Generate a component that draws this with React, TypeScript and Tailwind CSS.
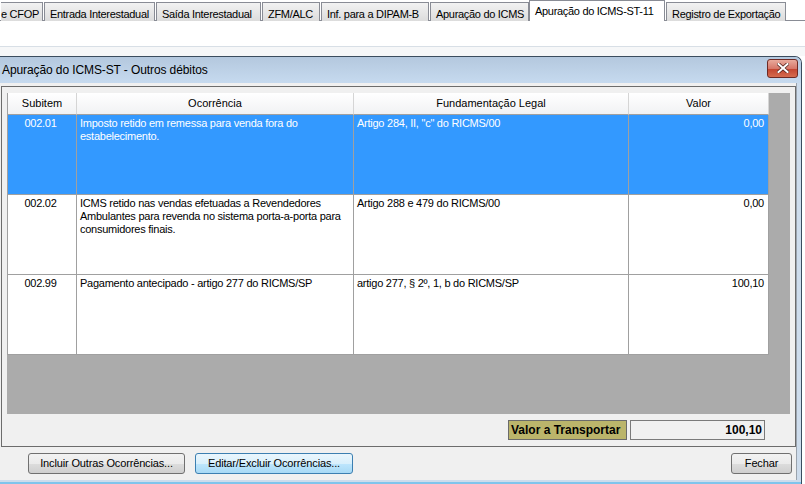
import React from "react";

const font = { fontFamily: '"Liberation Sans", Arial, sans-serif' };

const tabs = [
  { label: "e CFOP", w: "w-[42px]", active: false, first: true },
  { label: "Entrada Interestadual", w: "w-[111px]", active: false },
  { label: "Saída Interestadual", w: "w-[105px]", active: false },
  { label: "ZFM/ALC", w: "w-[58px]", active: false },
  { label: "Inf. para a DIPAM-B", w: "w-[108px]", active: false },
  { label: "Apuração do ICMS", w: "w-[99px]", active: false },
  { label: "Apuração do ICMS-ST-11", w: "w-[136px]", active: true },
  { label: "Registro de Exportação", w: "w-[120px]", active: false },
];

const rows = [
  {
    sub: "002.01",
    oc: "Imposto retido em remessa para venda fora do estabelecimento.",
    fund: 'Artigo 284, II, "c" do RICMS/00',
    val: "0,00",
    sel: true,
  },
  {
    sub: "002.02",
    oc: "ICMS retido nas vendas efetuadas a Revendedores Ambulantes para revenda no sistema porta-a-porta para consumidores finais.",
    fund: "Artigo 288 e 479 do RICMS/00",
    val: "0,00",
    sel: false,
  },
  {
    sub: "002.99",
    oc: "Pagamento antecipado - artigo 277 do RICMS/SP",
    fund: "artigo 277, § 2º, 1, b do RICMS/SP",
    val: "100,10",
    sel: false,
  },
];

function Btn({ children, w, focused }: { children: React.ReactNode; w: string; focused?: boolean }) {
  return (
    <div
      className={`${w} h-[21px] rounded-[3px] border ${
        focused ? "border-[#3c7fb1]" : "border-[#707070]"
      } flex items-center justify-center text-[11px] tracking-[-0.15px] text-black ${
        focused
          ? "bg-[linear-gradient(to_bottom,#eaf6fd_0%,#d9f0fc_50%,#bee6fd_51%,#a7d9f5_100%)]"
          : "bg-[linear-gradient(to_bottom,#f2f2f2_0%,#ebebeb_50%,#dddddd_51%,#cfcfcf_100%)]"
      }`}
    >
      {children}
    </div>
  );
}

export default function App() {
  return (
    <div className="w-[805px] h-[484px] overflow-hidden bg-white flex flex-col" style={font}>
      {/* Tab strip */}
      <div className="h-[21px] flex items-end shrink-0 relative">
        <div className="absolute left-0 right-0 bottom-0 h-[1px] bg-[#898c95]" />
        {tabs.map((t, i) => (
          <div
            key={i}
            className={`${t.w} ${
              t.active
                ? "h-[21px] bg-white border-l border-r border-t border-[#898c95] z-10 pt-[2px] pl-[5px]"
                : "h-[19px] border-l border-r border-t border-[#898c95] bg-[linear-gradient(to_bottom,#f2f2f2,#dcdcdc)] pt-[3px] ml-[1px]"
            } ${t.first ? "border-l-0 ml-0 pl-0" : "pl-[5px]"} shrink-0 text-[11px] tracking-[-0.3px] text-black whitespace-nowrap overflow-hidden relative`}
          >
            {t.label}
          </div>
        ))}
      </div>
      {/* white page area */}
      <div className="h-[26px] bg-white border-b border-[#d8dfe6] shrink-0" />
      <div className="h-[9px] bg-[#f6f7f8] shrink-0" />
      {/* Dialog window */}
      <div className="w-[802px] flex-1 border-t border-r border-[#3b4c5e] rounded-tr-[7px] bg-[#cddcec] flex flex-col overflow-hidden">
        {/* Title bar */}
        <div className="h-[26px] shrink-0 bg-[linear-gradient(to_bottom,#b4c8de,#c6daef)] flex items-center pl-[2px] pr-[3px] justify-between">
          <span className="text-[12px] tracking-[-0.1px] text-black">Apuração do ICMS-ST - Outros débitos</span>
          <div className="w-[31px] h-[19px] rounded-[3px] border border-[#6e2a24] bg-[linear-gradient(to_bottom,#e9aa9c_0%,#d7786a_50%,#c2432f_51%,#d56c4f_100%)] flex items-center justify-center mt-[-4px]">
            <svg width="12" height="10" viewBox="0 0 12 10">
              <path d="M1.5 1 L10.5 9 M10.5 1 L1.5 9" stroke="#5a2a24" strokeWidth="3.6" strokeLinecap="square" />
              <path d="M1.5 1 L10.5 9 M10.5 1 L1.5 9" stroke="#ffffff" strokeWidth="2" strokeLinecap="square" />
            </svg>
          </div>
        </div>
        {/* Client area */}
        <div className="flex-1 mr-[4px] mb-[2px] bg-[#f0f0f0] border-r border-[#9aa3ad] flex flex-col">
          {/* Panel */}
          <div className="ml-[1px] mt-[3px] w-[795px] h-[361px] border border-[#6c6c6c] flex flex-col">
            {/* Grid */}
            <div className="ml-[5px] mt-[6px] w-[783px] h-[321px] bg-[#ababab] flex flex-col">
              {/* Header */}
              <div className="flex h-[22px] text-[11px] text-black">
                <div className="w-[70px] border-l border-[#a0a0a0] border-r border-r-[#d5d5d5] border-b border-b-[#a0a0a0] bg-[linear-gradient(to_bottom,#ffffff,#f1f2f4)] flex items-center justify-center">
                  Subitem
                </div>
                <div className="w-[277px] border-r border-[#d5d5d5] border-b border-b-[#a0a0a0] bg-[linear-gradient(to_bottom,#ffffff,#f1f2f4)] flex items-center justify-center">
                  Ocorrência
                </div>
                <div className="w-[275px] border-r border-[#d5d5d5] border-b border-b-[#a0a0a0] bg-[linear-gradient(to_bottom,#ffffff,#f1f2f4)] flex items-center justify-center">
                  Fundamentação Legal
                </div>
                <div className="w-[140px] border-r border-[#d5d5d5] border-b border-b-[#a0a0a0] bg-[linear-gradient(to_bottom,#ffffff,#f1f2f4)] flex items-center justify-center">
                  Valor
                </div>
              </div>
              {rows.map((r, i) => {
                const cell = r.sel ? "bg-[#3399ff] text-white" : "bg-white text-black";
                return (
                  <div key={i} className="flex h-[80px] text-[11px] leading-[13px] tracking-[-0.25px]">
                    <div className={`${cell} w-[70px] border-l border-r border-b border-[#a0a0a0] text-center pt-[2px] pr-[3px]`}>{r.sub}</div>
                    <div className={`${cell} w-[277px] border-r border-b border-[#a0a0a0] pl-[3px] pr-[4px] pt-[2px]`}>{r.oc}</div>
                    <div className={`${cell} w-[275px] border-r border-b border-[#a0a0a0] pl-[3px] pt-[2px]`}>{r.fund}</div>
                    <div className={`${cell} w-[140px] border-r border-b border-[#a0a0a0] pr-[4px] pt-[2px] text-right`}>{r.val}</div>
                  </div>
                );
              })}
            </div>
            {/* Total */}
            <div className="mt-[6px] flex ml-[506px] gap-[3px]">
              <div className="w-[119px] h-[20px] bg-[#bbb56b] border border-[#6b6b6b] text-[12px] font-bold text-black flex items-center pl-[2px] whitespace-nowrap">
                Valor a Transportar
              </div>
              <div className="w-[135px] h-[20px] bg-[#f0f0f0] border border-[#7a7a7a] text-[12px] font-bold text-black flex items-center justify-end pr-[2px]">
                100,10
              </div>
            </div>
          </div>
          {/* Buttons */}
          <div className="mt-[6px] flex">
            <div className="ml-[28px]">
              <Btn w="w-[157px]">Incluir Outras Ocorrências...</Btn>
            </div>
            <div className="ml-[10px]">
              <Btn w="w-[158px]" focused>
                Editar/Excluir Ocorrências...
              </Btn>
            </div>
            <div className="ml-[378px]">
              <Btn w="w-[61px]">Fechar</Btn>
            </div>
          </div>
        </div>
        <div className="h-[2px] bg-[#7fc4ec] shrink-0" />
      </div>
    </div>
  );
}
